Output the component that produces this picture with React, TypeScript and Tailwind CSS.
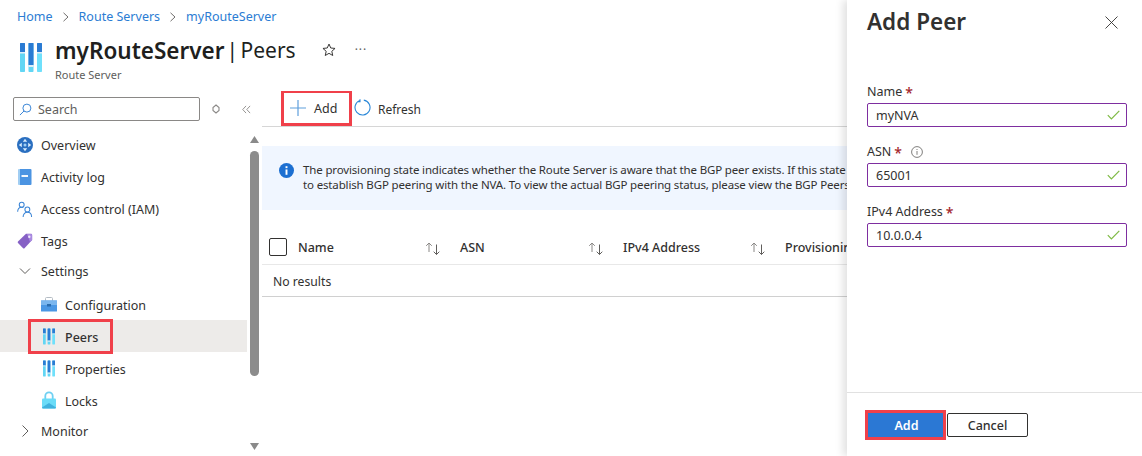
import React from "react";

const RouteIcon = ({ className = "" }: { className?: string }) => (
  <svg viewBox="0 0 22 29" className={className}>
    <rect x="0" y="0" width="5" height="29" rx="0.800" fill="#62d6f4" />
    <rect x="8.500" y="0" width="5" height="29" rx="0.800" fill="#62d6f4" />
    <rect x="17" y="0" width="5" height="29" rx="0.800" fill="#6fe0fb" />
    <rect x="0" y="0" width="5" height="9" rx="0.500" fill="#2a7bd3" />
    <rect x="0" y="9" width="5" height="1.500" fill="#dfeef8" />
    <rect x="8.500" y="0" width="5" height="22" rx="0.500" fill="#2a7bd3" />
    <rect x="8.500" y="22" width="5" height="2" fill="#dfeef8" />
    <rect x="17" y="0" width="5" height="9" rx="0.500" fill="#2a7bd3" />
    <rect x="17" y="9" width="5" height="1.500" fill="#dfeef8" />
  </svg>
);

const Overview = () => (
  <svg viewBox="0 0 16 16" className="w-4 h-4">
    <circle cx="8" cy="8" r="8" fill="#2a6fc0" />
    <path d="M8 1.800 10.200 4.800H5.800zM8 14.200 5.800 11.200h4.400zM1.800 8 4.800 5.800v4.400zM14.200 8 11.200 10.200V5.800z" fill="#d8ecfb" />
    <circle cx="8" cy="8" r="1.500" fill="#9fd0f5" />
  </svg>
);
const Log = () => (
  <svg viewBox="0 0 14 16" className="w-[14px] h-4">
    <rect x="0.500" y="0" width="13" height="16" rx="1" fill="#4b94e2" />
    <rect x="0.500" y="0" width="1.500" height="16" fill="#9fcff3" />
    <rect x="3.500" y="6" width="6.500" height="2" fill="#f2f8fd" />
  </svg>
);
const Iam = () => (
  <svg viewBox="0 0 17 17" className="w-[17px] h-[17px]" fill="none" stroke="#3b85d6" strokeWidth="1.100">
    <circle cx="5" cy="3.500" r="2.600" />
    <path d="M.7 11c0-3.200 1.600-5 4.300-5 .6 0 1.200.1 1.700.3" />
    <circle cx="11" cy="8.500" r="2.600" />
    <path d="M6.500 16.500c0-3 1.800-5 4.500-5s4.500 2 4.500 5" />
  </svg>
);
const Tag = () => (
  <svg viewBox="0 0 16 16" className="w-4 h-4">
    <path d="M9 .8h5.200c.5 0 .9.400.9.900V7L7.500 15.200a1 1 0 0 1-1.400 0L1 10a1 1 0 0 1 0-1.400z" fill="#8661c5" />
    <path d="M10 1h4.200c.5 0 .9.400.9.900V7l-2 2z" fill="#a98ae0" />
    <circle cx="12.300" cy="3.700" r="1.200" fill="#efe8fb" />
  </svg>
);
const Briefcase = () => (
  <svg viewBox="0 0 16 15" className="w-4 h-[15px]">
    <rect x="4.500" y="0.500" width="7" height="4" rx="1" fill="none" stroke="#b4bcc4" strokeWidth="1" />
    <rect x="0" y="3.500" width="16" height="11" rx="0.500" fill="#4a97e4" />
    <rect x="0" y="3.500" width="16" height="4.500" fill="#7ab6ee" />
    <rect x="6" y="7" width="4" height="2.500" fill="#2a6cae" />
  </svg>
);
const Lock = () => (
  <svg viewBox="0 0 16 18" className="w-4 h-[18px]">
    <path d="M4.300 8V5a3.700 3.700 0 0 1 7.400 0v3" fill="none" stroke="#6fd0f2" strokeWidth="1.800" />
    <rect x="1" y="7.500" width="14" height="10" rx="1" fill="#6adcf8" />
    <path d="M1 16.500 8 12l7 4.500a1 1 0 0 1-1 1H2a1 1 0 0 1-1-1z" fill="#3fb2de" />
  </svg>
);
const SortArrows = () => (
  <svg viewBox="0 0 16 13" className="w-4 h-[13px]" fill="none" strokeWidth="1">
    <path d="M4 10V1M1.200 3.800 4 1l2.800 2.800" stroke="#8a8886" />
    <path d="M11.500 2.500v10M8.700 9.700l2.800 2.800 2.800-2.800" stroke="#605e5c" />
  </svg>
);
const Check = () => (
  <svg viewBox="0 0 13 10" className="w-[13px] h-[10px] shrink-0" fill="none" stroke="#7fba44" strokeWidth="1.200">
    <path d="M.8 5.200 4.400 9 12.300 .8" />
  </svg>
);
const Chevron = ({ dir }: { dir: "down" | "right" }) => (
  <svg viewBox="0 0 12 12" className="w-3 h-3" fill="none" stroke="#605e5c" strokeWidth="1">
    <path d={dir === "down" ? "M1 3.500 6 8.500l5-5" : "M3.500 .5 9 6l-5.500 5.500"} />
  </svg>
);

const NavRow = ({ icon, label }: { icon: React.ReactNode; label: string }) => (
  <div className="h-8 flex items-center pl-[17px]">
    <span className="w-4 flex justify-center shrink-0">{icon}</span>
    <span className="ml-2 pt-[3px]">{label}</span>
  </div>
);
const SubRow = ({ icon, label, active, h = "h-8" }: { icon: React.ReactNode; label: string; active?: boolean; h?: string }) => (
  <div className={`${h} relative flex items-center pl-[41px] ${active ? "bg-[#edebe9] font-medium" : ""}`}>
    <span className="w-4 flex justify-center shrink-0">{icon}</span>
    <span className="ml-2 pt-[4px]">{label}</span>
    {active && <span className="absolute left-[28px] -top-px w-[85px] h-[35px] border-[3px] border-[#f0404a]" />}
  </div>
);
const GroupRow = ({ dir, label, pt }: { dir: "down" | "right"; label: string; pt: string }) => (
  <div className={`h-8 flex items-start pl-[19px] ${pt}`}>
    <span className="w-3 h-4 flex items-center shrink-0"><Chevron dir={dir} /></span>
    <span className="ml-[10px]">{label}</span>
  </div>
);

const Field = ({ label, value, info }: { label: string; value: string; info?: boolean }) => (
  <div className="flex flex-col">
    <div className="h-[19px] pt-[1px] flex items-center text-[#323130]">
      <span>{label}</span>
      <span className="text-[#a4262c] ml-[3px] text-[14px] font-medium">*</span>
      {info && (
        <svg viewBox="0 0 12 12" className="w-3 h-3 ml-[9px]" fill="none" stroke="#605e5c" strokeWidth="0.800">
          <circle cx="6" cy="6" r="5.400" />
          <path d="M6 5v3.800M6 3v1" />
        </svg>
      )}
    </div>
    <div className="mt-[2px] h-6 w-[260px] border border-[#7e2ea0] rounded-[2px] flex items-center justify-between pl-2 pr-[6px] text-[#323130]">
      <span className="pt-[2px]">{value}</span>
      <Check />
    </div>
  </div>
);

export default function App() {
  return (
    <div className="w-[1142px] h-[456px] overflow-hidden flex bg-white text-[12.5px] text-[#323130] font-['Noto_Sans',sans-serif]">
      <div className="w-[847px] shrink-0 flex flex-col">
        <div className="h-[91px] shrink-0 pl-[17px]">
          <div className="pt-[8px] h-[26px] flex items-center gap-[9px] text-[#2b7cd3]">
            <span>Home</span>
            <svg viewBox="0 0 8 10" className="w-2 h-[10px]" fill="none" stroke="#605e5c" strokeWidth="0.900"><path d="M1.500 .8 6 5 1.500 9.200" /></svg>
            <span>Route Servers</span>
            <svg viewBox="0 0 8 10" className="w-2 h-[10px]" fill="none" stroke="#605e5c" strokeWidth="0.900"><path d="M1.500 .8 6 5 1.500 9.200" /></svg>
            <span>myRouteServer</span>
          </div>
          <div className="flex items-start mt-[9px]">
            <RouteIcon className="w-[22px] h-[29px] ml-[3px] mt-[8px] shrink-0" />
            <div className="ml-[13px]">
              <div className="flex items-center h-[32px] text-[22.500px] text-[#201f1e]">
                <span className="font-semibold">myRouteServer</span>
                <span className="ml-[2px] text-[21px] [word-spacing:-3px]">| Peers</span>
                <svg viewBox="0 0 16 16" className="w-[14px] h-[14px] ml-[26px] -mt-[3px]" fill="none" stroke="#323130" strokeWidth="1.100"><path d="m8 1.200 2 4.500 4.900.5-3.700 3.300 1.100 4.800L8 11.800l-4.300 2.500 1.100-4.800L1.100 6.200 6 5.700z" /></svg>
                <span className="ml-[19px] text-[#605e5c] text-[12px] tracking-[1px] -mt-[3px]">···</span>
              </div>
              <div className="text-[11px] text-[#605e5c] leading-[14px] mt-[1px]">Route Server</div>
            </div>
          </div>
        </div>
        <div className="flex flex-1 min-h-0">
          <div className="w-[262px] shrink-0 relative flex flex-col">
            <div className="h-[38px] shrink-0 flex items-start pt-[6px] pl-[13px]">
              <div className="w-[187px] h-6 border border-[#8a8886] rounded-[2px] flex items-center pl-[5px] gap-[6px] text-[#605e5c]">
                <svg viewBox="0 0 14 14" className="w-[13px] h-[13px]" fill="none" stroke="#2b7cd3" strokeWidth="1"><circle cx="8.500" cy="5.500" r="4.300" /><path d="M5.500 8.500 1 13" /></svg>
                <span className="pt-[2px]">Search</span>
              </div>
              <svg viewBox="0 0 8 10" className="w-2 h-[10px] ml-[12px] mt-[7px]" fill="none" stroke="#8a8886" strokeWidth="1.100"><path d="M4 1 7 3.500v3L4 9 1 6.500v-3z" /></svg>
              <svg viewBox="0 0 10 10" className="w-[9px] h-[9px] ml-[22px] mt-[8px]" fill="none" stroke="#8a8886" strokeWidth="1"><path d="M4.500 1 .8 5l3.700 4M9 1 5.300 5 9 9" /></svg>
            </div>
            <NavRow icon={<Overview />} label="Overview" />
            <NavRow icon={<Log />} label="Activity log" />
            <NavRow icon={<Iam />} label="Access control (IAM)" />
            <NavRow icon={<Tag />} label="Tags" />
            <GroupRow dir="down" label="Settings" pt="pt-[6px]" />
            <div className="w-[247px]">
              <SubRow h="h-[31px]" icon={<Briefcase />} label="Configuration" />
              <SubRow active icon={<RouteIcon className="w-3 h-[17px]" />} label="Peers" />
              <SubRow icon={<RouteIcon className="w-3 h-[17px]" />} label="Properties" />
              <SubRow icon={<Lock />} label="Locks" />
            </div>
            <GroupRow dir="right" label="Monitor" pt="pt-[7px]" />
            <div className="absolute left-[250px] top-[45px] w-[9px] flex flex-col items-center">
              <svg viewBox="0 0 9 7" className="w-[9px] h-[7px]"><path d="M4.500 0 9 7H0z" fill="#8a8a8a" /></svg>
              <div className="mt-[8px] w-[9px] h-[225px] rounded-full bg-[#8c8c8c]" />
              <svg viewBox="0 0 9 7" className="w-[9px] h-[7px] mt-[67px]"><path d="M4.500 7 9 0H0z" fill="#8a8a8a" /></svg>
            </div>
          </div>
          <div className="flex-1 min-w-0 overflow-hidden flex flex-col">
            <div className="h-[36px] shrink-0 border-b border-[#d6d6d6] flex items-end">
              <div className="ml-[19px] w-[71px] h-[36px] border-[3px] border-[#f0404a] flex items-center pl-[6px] gap-[8px] relative -mt-[1px]">
                <svg viewBox="0 0 16 16" className="w-4 h-4 shrink-0" fill="none" stroke="#5f9fdc" strokeWidth="1.200"><path d="M8 0v16M0 8h16" /></svg>
                <span className="pt-[3px]">Add</span>
              </div>
              <div className="h-[35px] flex items-center ml-[2px] gap-[7px]">
                <svg viewBox="0 0 17 17" className="w-[17px] h-[17px] -mt-[2px]" fill="none" stroke="#2b88d8" strokeWidth="1.100"><path d="M5.800 1.500a7.500 7.500 0 1 0 4-.4M6 .2v2.500H3.300" /></svg>
                <span className="pt-[3px] text-[12px]">Refresh</span>
              </div>
            </div>
            <div className="mt-[19px] h-[64px] shrink-0 bg-[#f0f6ff] flex items-start pl-[17px] pt-[16px] overflow-hidden">
              <svg viewBox="0 0 14 14" className="w-[15px] h-[15px] shrink-0 mt-[1px]"><circle cx="7" cy="7" r="7" fill="#1c6fd1" /><rect x="6.100" y="6" width="1.800" height="5" fill="#fff" /><rect x="6.100" y="3" width="1.800" height="1.800" fill="#fff" /></svg>
              <div className="ml-[9px] text-[11.500px] tracking-[-0.150px] leading-[15px] whitespace-nowrap">
                <div>The provisioning state indicates whether the Route Server is aware that the BGP peer exists. If this state is Succeeded, the Route Server is able</div>
                <div>to establish BGP peering with the NVA. To view the actual BGP peering status, please view the BGP Peers page for this resource.</div>
              </div>
            </div>
            <div className="mt-[20px] h-[35px] shrink-0 border-b border-[#e8e8e8] grid grid-cols-[180px_163px_162px_1fr] items-center font-medium whitespace-nowrap">
              <div className="flex items-center pl-[7px] pt-[2px]">
                <span className="w-[18px] h-[18px] border border-[#323130] rounded-[2px] mr-[11px] shrink-0 -mt-[2px]" />
                <span>Name</span>
                <span className="ml-auto mr-[1px]"><SortArrows /></span>
              </div>
              <div className="flex items-center pl-[18px] pt-[2px]"><span>ASN</span><span className="ml-auto mr-[1px]"><SortArrows /></span></div>
              <div className="flex items-center pl-[18px] pt-[2px]"><span>IPv4 Address</span><span className="ml-auto mr-[1px]"><SortArrows /></span></div>
              <div className="pl-[18px] pt-[2px]">Provisioning state</div>
            </div>
            <div className="h-[32px] shrink-0 border-b border-[#d0d0d0] flex items-center pl-[11px] pt-[3px] text-[12.200px]">No results</div>
          </div>
        </div>
      </div>
      <div className="flex-1 relative flex flex-col shadow-[-4px_0_8px_rgba(0,0,0,0.12)] bg-white">
        <div className="h-[393px] shrink-0 border-b border-[#e1e1e1] pl-[20px]">
          <div className="h-[44px] flex items-center justify-between pr-[24px]">
            <span className="text-[22.500px] font-semibold text-[#323130]">Add Peer</span>
            <svg viewBox="0 0 13 13" className="w-[13px] h-[13px]" fill="none" stroke="#323130" strokeWidth="0.900"><path d="M.5.500l12 12M12.500.500l-12 12" /></svg>
          </div>
          <div className="mt-[38px] flex flex-col gap-[15px]">
            <Field label="Name" value="myNVA" />
            <Field label="ASN" value="65001" info />
            <Field label="IPv4 Address" value="10.0.0.4" />
          </div>
        </div>
        <div className="flex items-center pl-[18px] pt-[17px]">
          <div className="w-[81px] h-[30px] border-[3px] border-[#f0404a] bg-[#2b78d4] text-white font-semibold flex items-center justify-center pt-[2px] pl-[2px]">Add</div>
          <div className="ml-px w-[81px] h-6 border border-[#323130] rounded-[2px] flex items-center justify-center font-medium pt-[2px]">Cancel</div>
        </div>
      </div>
    </div>
  );
}
